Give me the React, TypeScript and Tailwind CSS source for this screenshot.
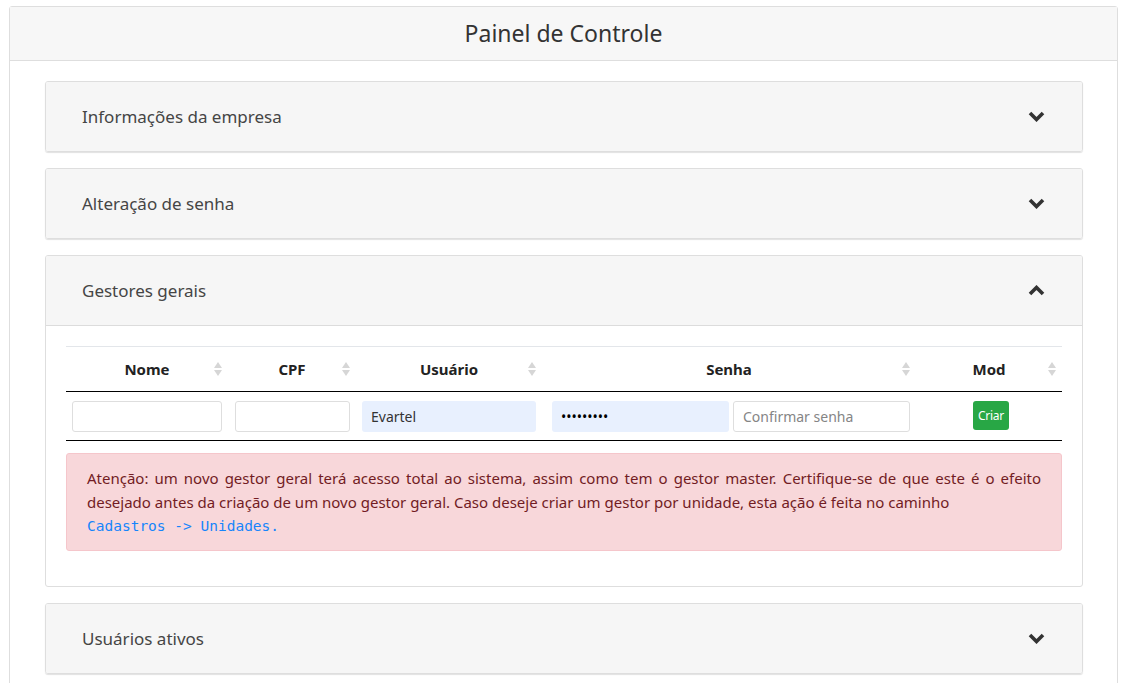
import React from "react";

const FONT = "font-['Noto_Sans','Open_Sans',sans-serif]";

function Chevron({ up = false }: { up?: boolean }) {
  return (
    <svg width="17" height="11" viewBox="0 0 17 11" className="block">
      <polyline
        points={up ? "2,9 8.5,2.5 15,9" : "2,2 8.5,8.5 15,2"}
        fill="none"
        stroke="#333"
        strokeWidth="3.6"
        strokeLinejoin="miter"
      />
    </svg>
  );
}

function SortIcon() {
  return (
    <svg width="8" height="14" viewBox="0 0 8 14" className="block">
      <polygon points="4,0 8,6 0,6" fill="#d6d6d6" />
      <polygon points="0,8 8,8 4,14" fill="#d6d6d6" />
    </svg>
  );
}

function AccordionHeader({ title, open = false }: { title: string; open?: boolean }) {
  return (
    <div
      className={`${open ? "h-[70px] border-b border-[#dcdcdc]" : "h-[69px]"} bg-[#f6f6f6] flex items-center justify-between pl-[36px] pr-[37px]`}
    >
      <span className="text-[17px] text-[#454545]">{title}</span>
      <Chevron up={open} />
    </div>
  );
}

function Collapsed({ title }: { title: string }) {
  return (
    <div className="border border-[#dedede] rounded-[3px] overflow-hidden shadow-[0_1px_1px_rgba(0,0,0,0.12)]">
      <AccordionHeader title={title} />
    </div>
  );
}

const COLS = ["Nome", "CPF", "Usuário", "Senha", "Mod"];

export default function App() {
  return (
    <div className={`${FONT} bg-white min-h-[683px] pt-[6px] pl-[9px] pr-[14px]`}>
      <div className="border border-[#dedede] rounded-t-[3px]">
        <div className="h-[54px] bg-[#f7f7f7] border-b border-[#dedede] flex items-center justify-center">
          <h1 className="text-[23px] text-[#333]">Painel de Controle</h1>
        </div>

        <div className="pl-[35px] pr-[34px] pt-[20px] pb-[20px] flex flex-col gap-[16px]">
          <Collapsed title="Informações da empresa" />
          <Collapsed title="Alteração de senha" />

          <div className="border border-[#dedede] rounded-[3px] overflow-hidden">
            <AccordionHeader title="Gestores gerais" open />
            <div className="px-[20px] pt-[20px] pb-[35px]">
              <div className="border-t border-[#e3e6ea]">
                <div className="grid grid-cols-[162px_128px_186px_374px_146px] h-[45px] border-b border-black">
                  {COLS.map((c) => (
                    <div key={c} className="relative flex items-center justify-center">
                      <span className="text-[15px] font-bold text-[#222]">{c}</span>
                      <span className="absolute right-[6px] top-[15px]">
                        <SortIcon />
                      </span>
                    </div>
                  ))}
                </div>
                <div className="grid grid-cols-[162px_128px_186px_374px_146px] pt-[9px] pb-[8px] border-b border-black text-[14px]">
                  <div className="pl-[6px] pr-[6px]">
                    <input className="w-full h-[31px] border border-[#dedede] rounded-[3px] px-[9px] outline-none" />
                  </div>
                  <div className="pl-[7px] pr-[6px]">
                    <input className="w-full h-[31px] border border-[#dedede] rounded-[3px] px-[9px] outline-none" />
                  </div>
                  <div className="pl-[6px] pr-[6px]">
                    <input
                      defaultValue="Evartel"
                      className="w-full h-[31px] bg-[#e8f0fe] rounded-[3px] px-[9px] text-[#333] outline-none"
                    />
                  </div>
                  <div className="pl-[10px] pr-[6px] flex gap-[4px]">
                    <input
                      type="password"
                      defaultValue="123456789"
                      className="w-[177px] h-[31px] bg-[#e8f0fe] rounded-[3px] px-[9px] text-black outline-none"
                    />
                    <input
                      placeholder="Confirmar senha"
                      className="w-[177px] h-[31px] border border-[#dedede] rounded-[3px] px-[9px] outline-none placeholder:text-[#858585]"
                    />
                  </div>
                  <div className="flex justify-center pl-[4px]">
                    <button className="w-[36px] h-[29px] bg-[#28a745] rounded-[3px] text-white text-[12px] tracking-[-0.3px]">
                      Criar
                    </button>
                  </div>
                </div>
              </div>

              <div className="mt-[12px] bg-[#f8d7da] border border-[#f5c6cb] rounded-[3px] px-[20px] py-[12px] text-[15px] leading-[24px] text-[#721c24]">
                <p className="text-justify [text-align-last:justify]">
                  Atenção: um novo gestor geral terá acesso total ao sistema, assim como tem o gestor master. Certifique-se de que este é o efeito
                </p>
                <p>desejado antes da criação de um novo gestor geral. Caso deseje criar um gestor por unidade, esta ação é feita no caminho</p>
                <code className="block font-['DejaVu_Sans_Mono','Liberation_Mono',monospace] text-[14.5px] text-[#1685fb]">
                  Cadastros -&gt; Unidades.
                </code>
              </div>
            </div>
          </div>

          <Collapsed title="Usuários ativos" />
        </div>
      </div>
    </div>
  );
}
